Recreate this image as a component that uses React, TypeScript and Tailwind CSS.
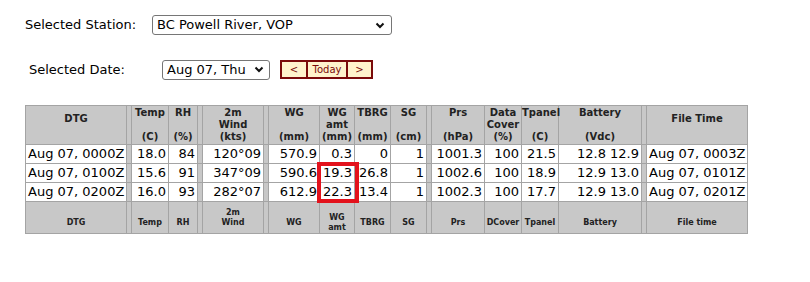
import React from 'react';

type Col = {
  h: string[];
  f: string[];
  w: string;
  left?: boolean;
  sep?: boolean;
};

const SEP: Col = { h: [], f: [], w: 'w-[5px]', sep: true };

const columns: Col[] = [
  { h: ['DTG', ''], f: ['', 'DTG'], w: 'w-[101px]', left: true },
  SEP,
  { h: ['Temp', '', '(C)'], f: ['', 'Temp'], w: 'w-[37px]' },
  { h: ['RH', '', '(%)'], f: ['', 'RH'], w: 'w-[29px]' },
  SEP,
  { h: ['2m', 'Wind', '(kts)'], f: ['2m', 'Wind'], w: 'w-[61px]' },
  SEP,
  { h: ['WG', '', '(mm)'], f: ['', 'WG'], w: 'w-[51px]' },
  { h: ['WG', 'amt', '(mm)'], f: ['', 'WG', 'amt'], w: 'w-[35px]' },
  { h: ['TBRG', '', '(mm)'], f: ['', 'TBRG'], w: 'w-[36px]' },
  { h: ['SG', '', '(cm)'], f: ['', 'SG'], w: 'w-[36px]' },
  SEP,
  { h: ['Prs', '', '(hPa)'], f: ['', 'Prs'], w: 'w-[53px]' },
  { h: ['Data', 'Cover', '(%)'], f: ['', 'DCover'], w: 'w-[37px]' },
  { h: ['Tpanel', '', '(C)'], f: ['', 'Tpanel'], w: 'w-[37px]' },
  { h: ['Battery', '', '(Vdc)'], f: ['', 'Battery'], w: 'w-[83px]' },
  SEP,
  { h: ['File Time', ''], f: ['', 'File time'], w: 'w-[101px]', left: true },
];

const rows = [
  ['Aug 07, 0000Z', '18.0', '84', '120°09', '570.9', '0.3', '0', '1', '1001.3', '100', '21.5', '12.8 12.9', 'Aug 07, 0003Z'],
  ['Aug 07, 0100Z', '15.6', '91', '347°09', '590.6', '19.3', '26.8', '1', '1002.6', '100', '18.9', '12.9 13.0', 'Aug 07, 0101Z'],
  ['Aug 07, 0200Z', '16.0', '93', '282°07', '612.9', '22.3', '13.4', '1', '1002.3', '100', '17.7', '12.9 13.0', 'Aug 07, 0201Z'],
];

const Chevron = () => (
  <svg width="10" height="7" viewBox="0 0 10 7" className="shrink-0">
    <polyline points="1.5,1.5 5,5 8.5,1.5" fill="none" stroke="#111" strokeWidth="2" />
  </svg>
);

const Lines = ({ items }: { items: string[] }) => (
  <>
    {items.map((t, i) => (
      <div key={i} className="whitespace-nowrap">{t === '' ? '\u00a0' : t}</div>
    ))}
  </>
);

const App = () => {
  let dataIdx = 0;
  const dataCells = columns.map((c) => (c.sep ? -1 : dataIdx++));

  return (
    <div className="w-[810px] h-[282px] bg-white pt-[15px] pl-[25px] font-['DejaVu_Sans',sans-serif] text-black">
      <div className="flex items-center h-[20px]">
        <div className="w-[127px] text-[13px]">Selected Station:</div>
        <div className="w-[240px] h-[20px] border border-[#767676] rounded-[3px] flex items-center justify-between pl-[4px] pr-[6px] text-[13px]">
          <span>BC Powell River, VOP</span>
          <Chevron />
        </div>
      </div>

      <div className="flex items-center h-[19px] mt-[25px]">
        <div className="w-[133px] ml-[4px] text-[13px]">Selected Date:</div>
        <div className="w-[108px] h-[20px] border border-[#767676] rounded-[3px] flex items-center justify-between pl-[4px] pr-[5px] text-[13px]">
          <span>Aug 07, Thu</span>
          <Chevron />
        </div>
        <div className="ml-[10px] flex h-[19px] border-2 border-[#7a0a0a] bg-[#fff3cc] text-[#7a0a0a] text-[10px]">
          <div className="w-[24px] flex items-center justify-center">&lt;</div>
          <div className="w-[40px] flex items-center justify-center border-l-2 border-[#7a0a0a]">Today</div>
          <div className="w-[25px] flex items-center justify-center border-l-2 border-[#7a0a0a]">&gt;</div>
        </div>
      </div>

      <div className="relative mt-[26px] w-[722px]">
        <table className="table-fixed border-collapse w-[722px] border border-[#8c8c8c]">
          <colgroup>
            {columns.map((c, i) => (
              <col key={i} className={c.w} />
            ))}
          </colgroup>
          <thead>
            <tr className="h-[39px] bg-[#c8c8c8]">
              {columns.map((c, i) => (
                <th key={i} className="border border-[#a4a4a4] p-0 text-center align-middle text-[10px] leading-[12px] font-bold text-[#222]">
                  <Lines items={c.h} />
                </th>
              ))}
            </tr>
          </thead>
          <tbody>
            {rows.map((r, ri) => (
              <tr key={ri} className="h-[19px]">
                {columns.map((c, i) =>
                  c.sep ? (
                    <td key={i} className="border border-[#a4a4a4] bg-[#c8c8c8] p-0" />
                  ) : (
                    <td
                      key={i}
                      className={
                        'border border-[#a4a4a4] py-0 px-[2px] text-[13px] leading-[16px] whitespace-nowrap ' +
                        (c.left ? 'text-left' : 'text-right')
                      }
                    >
                      {r[dataCells[i]]}
                    </td>
                  )
                )}
              </tr>
            ))}
            <tr className="h-[32px] bg-[#c8c8c8]">
              {columns.map((c, i) => (
                <td key={i} className="border border-[#a4a4a4] p-0 text-center align-middle text-[8px] leading-[10px] font-bold text-[#222]">
                  <Lines items={c.f} />
                </td>
              ))}
            </tr>
          </tbody>
        </table>
        <div className="absolute left-[292px] top-[57px] w-[42px] h-[41px] border-4 border-[#e3121c]" />
      </div>
    </div>
  );
};

export default App;
